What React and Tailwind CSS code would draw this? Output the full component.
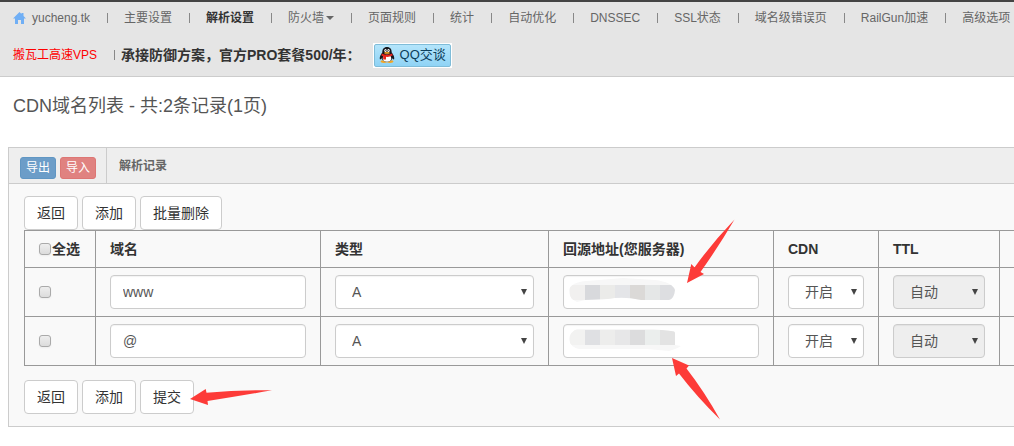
import { clsx } from 'clsx';

const navItems = [
  { label: '主要设置' },
  { label: '解析设置', active: true },
  { label: '防火墙', caret: true },
  { label: '页面规则' },
  { label: '统计' },
  { label: '自动优化' },
  { label: 'DNSSEC' },
  { label: 'SSL状态' },
  { label: '域名级错误页' },
  { label: 'RailGun加速' },
  { label: '高级选项' },
];

const records = [
  {
    name: 'www',
    mask: {
      outline: 'M6 15Q8 7 24 6L60 3L92 5Q109 7 112 15Q111 24 106 25H78Q60 21 45 24L22 25L14 27Q6 24 6 15Z',
      top: 10,
      colors: ['#f1f0ef', '#d8d9dc', '#ebebe9', '#e4e5e8', '#dbd9d7', '#e5e7e7', '#dddee1'],
    },
  },
  {
    name: '@',
    mask: {
      outline: 'M14 5L90 5L108 7Q112 7 112 9V21L118 22Q115 24 112 25L106 27L84 25H16Q7 23 6 15Q7 8 14 5Z',
      top: 6,
      colors: ['#f2f2f1', '#dfe0e3', '#ededec', '#e7e7e8', '#dcdcdd', '#ebeeed', '#e3e3e3'],
    },
  },
];

function HomeIcon() {
  return (
    <svg className="h-3 w-[13px]" viewBox="0 0 13 12" fill="#70aff5" aria-hidden="true">
      <path d="M6.5 0L8.5 2V1H10.5V4L13 6.400H11V12H8V8H5V12H2V6.400H0Z" />
    </svg>
  );
}

function QQIcon() {
  return (
    <svg className="h-4 w-4" viewBox="0 0 16 16" aria-hidden="true">
      <ellipse cx="5" cy="14.6" rx="3.4" ry="1.3" fill="#f5a623" />
      <ellipse cx="11" cy="14.6" rx="3.4" ry="1.3" fill="#f5a623" />
      <path d="M8 0C4.8 0 3.2 2.2 3.3 5.6C1.6 8 .4 10 .8 12c.3 1 1.3.2 1.9-.7C3.5 14 5.6 15 8 15s4.500-1 5.300-3.700c.6.9 1.600 1.700 1.900.7.4-2-.8-4-2.500-6.400C12.800 2.200 11.200 0 8 0Z" fill="#17171d" />
      <ellipse cx="8" cy="11.300" rx="4.200" ry="3.500" fill="#fff" />
      <ellipse cx="6.500" cy="3.400" rx="1.200" ry="1.500" fill="#fff" />
      <ellipse cx="9.500" cy="3.400" rx="1.200" ry="1.500" fill="#fff" />
      <circle cx="6.800" cy="3.600" r=".5" fill="#111" />
      <circle cx="9.200" cy="3.600" r=".5" fill="#111" />
      <ellipse cx="8" cy="5.900" rx="2.900" ry=".9" fill="#f5a623" />
      <path d="M2.800 6.400Q8 9 13.200 6.400L13.600 8.600Q10 10.200 7 9.800V12.500H4.200V9.200Q3 8.900 2.400 8.400Z" fill="#e6231c" />
    </svg>
  );
}

function Separator() {
  return <span className="h-[10px] w-px bg-[#888]" />;
}

function Button({ children }) {
  return (
    <button
      type="button"
      className="h-[34px] rounded border border-[#ccc] bg-white px-3 text-sm text-[#333]"
    >
      {children}
    </button>
  );
}

function CheckBox({ id, label }) {
  return (
    <input
      id={id}
      type="checkbox"
      aria-label={label}
      className="h-3 w-3 appearance-none rounded-[3px] border border-[#aaa] bg-linear-to-b from-[#eee] to-[#dcdcdc] shadow-xs checked:bg-[#999]"
    />
  );
}

function Select({ label, value, disabled }) {
  return (
    <div className="relative">
      <select
        aria-label={label}
        disabled={disabled}
        className={clsx(
          'block h-[34px] w-full appearance-none rounded border border-[#ccc] pl-4 text-sm text-[#555] opacity-100 inset-shadow-xs',
          disabled ? 'bg-[#eee]' : 'bg-white'
        )}
      >
        <option>{value}</option>
      </select>
      <svg
        className="pointer-events-none absolute top-[14px] right-[7px] h-[6px] w-[6px]"
        viewBox="0 0 6 6"
        fill="#444"
        aria-hidden="true"
      >
        <path d="M0 0H6L3 6Z" />
      </svg>
    </div>
  );
}

function Mask({ outline, top, colors }) {
  const clip = `mask-${top}`;
  return (
    <svg
      className="pointer-events-none absolute top-0 left-0 h-[34px] w-[120px]"
      viewBox="0 0 120 34"
      aria-hidden="true"
    >
      <clipPath id={clip}>
        <path d={outline} />
      </clipPath>
      <g clipPath={`url(#${clip})`} shapeRendering="crispEdges">
        <rect width="120" height="34" fill="#f7f7f7" />
        {colors.map((color, i) => (
          <rect key={i} x={7 + i * 15} y={top} width="15" height="15" fill={color} />
        ))}
      </g>
    </svg>
  );
}

function Arrows() {
  return (
    <svg
      className="pointer-events-none absolute top-0 left-0 h-[446px] w-[1014px]"
      viewBox="0 0 1014 446"
      fill="#fd3b38"
      aria-hidden="true"
    >
      <path d="M687 283L691.300 264L694.500 267.500Q712 243 734.500 219.500Q719 246 700.500 272L704 274Z" />
      <path d="M672 358L689 365.500L686.500 368.500Q704 391 720 419.500Q697 397 679 373.500L676 376Z" />
      <path d="M190 399L205.700 389L206.500 392.700Q238 390 272 390.300Q240 396 207.500 401L208 405Z" />
    </svg>
  );
}

function Header() {
  return (
    <header className="border-t-2 border-b border-t-[#444] border-b-[#ccc] bg-[#e5e5e5]">
      <nav className="flex h-8 items-center overflow-hidden pl-[13px] text-xs whitespace-nowrap text-[#666]">
        <a href="#home" className="flex items-center gap-[6px] pr-[17px]">
          <HomeIcon />
          yucheng.tk
        </a>
        {navItems.map((item) => (
          <div key={item.label} className="flex items-center">
            <Separator />
            <a
              href="#"
              className={clsx(
                'flex items-center pr-[17px] pl-4',
                item.active && 'font-bold text-[#333]'
              )}
            >
              {item.label}
              {item.caret && (
                <svg className="ml-[2px] h-1 w-2" viewBox="0 0 8 4" fill="#666" aria-hidden="true">
                  <path d="M0 0H8L4 4Z" />
                </svg>
              )}
            </a>
          </div>
        ))}
      </nav>
      <div className="flex h-[42px] items-center pl-[13px]">
        <a href="#vps" className="pr-[17px] text-xs text-[#f00]">
          搬瓦工高速VPS
        </a>
        <Separator />
        <span className="pl-[6px] text-sm font-bold text-[#333]">
          承接防御方案，官方PRO套餐500/年：
        </span>
        <a
          href="#qq"
          className="ml-3 flex h-[25px] items-center border border-white bg-white"
        >
          <span className="flex h-[23px] items-center gap-[5px] rounded-xs border border-[#7fbcd8] bg-linear-to-b from-[#b4e5fb] to-[#8fd3f5] px-1 text-[13px] text-[#0c3f5c]">
            <QQIcon />
            QQ交谈
          </span>
        </a>
      </div>
    </header>
  );
}

function RecordsTable() {
  const cell = 'border border-[#999] px-[14px]';

  return (
    <table className="w-full table-fixed border-collapse text-sm text-[#333]">
      <colgroup>
        <col className="w-[71px]" />
        <col className="w-[225px]" />
        <col className="w-[228px]" />
        <col className="w-[225px]" />
        <col className="w-[105px]" />
        <col className="w-[121px]" />
        <col />
      </colgroup>
      <thead>
        <tr className="h-[37px] text-left">
          <th className={cell}>
            <div className="flex items-center">
              <CheckBox id="check-all" />
              <label htmlFor="check-all" className="ml-px whitespace-nowrap">
                全选
              </label>
            </div>
          </th>
          <th className={cell}>域名</th>
          <th className={cell}>类型</th>
          <th className={cell}>回源地址(您服务器)</th>
          <th className={cell}>CDN</th>
          <th className={cell}>TTL</th>
          <th className="border-y border-[#999]" />
        </tr>
      </thead>
      <tbody>
        {records.map((record) => (
          <tr key={record.name} className="h-[49px]">
            <td className={cell}>
              <div className="flex">
                <CheckBox label={record.name} />
              </div>
            </td>
            <td className={cell}>
              <input
                type="text"
                aria-label="域名"
                defaultValue={record.name}
                className="block h-[34px] w-full rounded border border-[#ccc] bg-white px-3 text-sm text-[#555] inset-shadow-xs"
              />
            </td>
            <td className={cell}>
              <Select label="类型" value="A" />
            </td>
            <td className={cell}>
              <div className="relative">
                <input
                  type="text"
                  aria-label="回源地址"
                  className="block h-[34px] w-full rounded border border-[#ccc] bg-white px-3 text-sm text-[#555] inset-shadow-xs"
                />
                <Mask {...record.mask} />
              </div>
            </td>
            <td className={cell}>
              <Select label="CDN" value="开启" />
            </td>
            <td className={cell}>
              <Select label="TTL" value="自动" disabled />
            </td>
            <td className="border-y border-[#999]" />
          </tr>
        ))}
      </tbody>
    </table>
  );
}

export default function App() {
  return (
    <div className="relative overflow-hidden bg-white pb-5 font-['Liberation_Sans','Noto_Sans_CJK_SC',sans-serif]">
      <Header />
      <h1 className="px-[13px] pt-[15px] text-lg text-[#555]">CDN域名列表 - 共:2条记录(1页)</h1>

      <section className="mt-[27px] ml-2 border-y border-l border-[#ccc] bg-[#f9f9f9]">
        <div className="flex h-9 border-b border-[#ccc] bg-[#eee]">
          <div className="flex items-center gap-1 border-r border-[#ccc] pt-1 pr-[10px] pl-[11px] text-xs text-white">
            <button type="button" className="h-[22px] rounded-[3px] border border-[#6096c3] bg-[#6c9dc8] px-[5px]">
              导出
            </button>
            <button type="button" className="h-[22px] rounded-[3px] border border-[#dd7674] bg-[#e08280] px-[5px]">
              导入
            </button>
          </div>
          <h2 className="flex items-center pl-3 text-xs font-bold text-[#666]">解析记录</h2>
        </div>

        <div className="py-3 pl-[15px]">
          <div className="flex gap-1">
            <Button>返回</Button>
            <Button>添加</Button>
            <Button>批量删除</Button>
          </div>
          <RecordsTable />
          <div className="mt-[14px] flex gap-1">
            <Button>返回</Button>
            <Button>添加</Button>
            <Button>提交</Button>
          </div>
        </div>
      </section>
      <Arrows />
    </div>
  );
}
